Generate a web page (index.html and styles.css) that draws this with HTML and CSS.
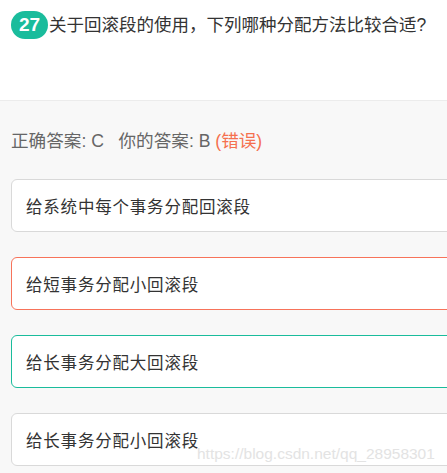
FILE: index.html
```html
<!DOCTYPE html>
<html lang="zh">
<head>
<meta charset="utf-8">
<link rel="stylesheet" href="styles.css">
</head>
<body>
<div class="page">
  <div class="question">
    <span class="badge">27</span><span class="qtext">关于回滚段的使用，下列哪种分配方法比较合适?</span>
  </div>
  <div class="answers">
    <div class="result">正确答案: C&nbsp;&nbsp;&nbsp;你的答案: B <span class="wrong">(错误)</span></div>
    <div class="option">给系统中每个事务分配回滚段</div>
    <div class="option option-wrong">给短事务分配小回滚段</div>
    <div class="option option-right">给长事务分配大回滚段</div>
    <div class="option">给长事务分配小回滚段</div>
    <div class="watermark">https://blog.csdn.net/qq_28958301</div>
  </div>
</div>
</body>
</html>
```
FILE: styles.css
```css
html, body {
  margin: 0;
  padding: 0;
  overflow: hidden;
  background: #f8f8f8;
}
body {
  font-family: "Liberation Sans", "Noto Sans CJK SC", sans-serif;
  width: 447px;
  height: 473px;
}
.page {
  position: relative;
  height: 473px;
}
.question {
  height: 101px;
  box-sizing: border-box;
  background: #fff;
  border-bottom: 1px solid #ececec;
  padding: 11px 0 0 11px;
  display: flex;
  align-items: flex-start;
}
.badge {
  display: inline-flex;
  align-items: center;
  justify-content: center;
  width: 37px;
  height: 28px;
  border-radius: 14px;
  background: #1abc9c;
  color: #fff;
  font-weight: bold;
  font-size: 19px;
  line-height: 28px;
}
.qtext {
  font-size: 17.5px;
  line-height: 28px;
  color: #333;
  margin-left: 1px;
}
.answers {
  padding: 26px 0 0 11px;
}
.result {
  font-size: 17.6px;
  line-height: 28px;
  color: #666;
  margin-bottom: 24px;
}
.wrong {
  color: #f5704f;
}
.option {
  width: 460px;
  height: 53px;
  box-sizing: border-box;
  background: #fff;
  border: 1px solid #d9d9d9;
  border-radius: 6px;
  padding-left: 14px;
  display: flex;
  align-items: center;
  font-size: 16.5px;
  letter-spacing: 0.8px;
  color: #333;
  margin-bottom: 25px;
}
.option-wrong {
  border-color: #f7735a;
}
.option-right {
  border-color: #1abc9c;
}
.watermark {
  position: absolute;
  left: 197px;
  top: 445px;
  font-size: 15.5px;
  color: #e3e3e3;
  white-space: nowrap;
}
```
